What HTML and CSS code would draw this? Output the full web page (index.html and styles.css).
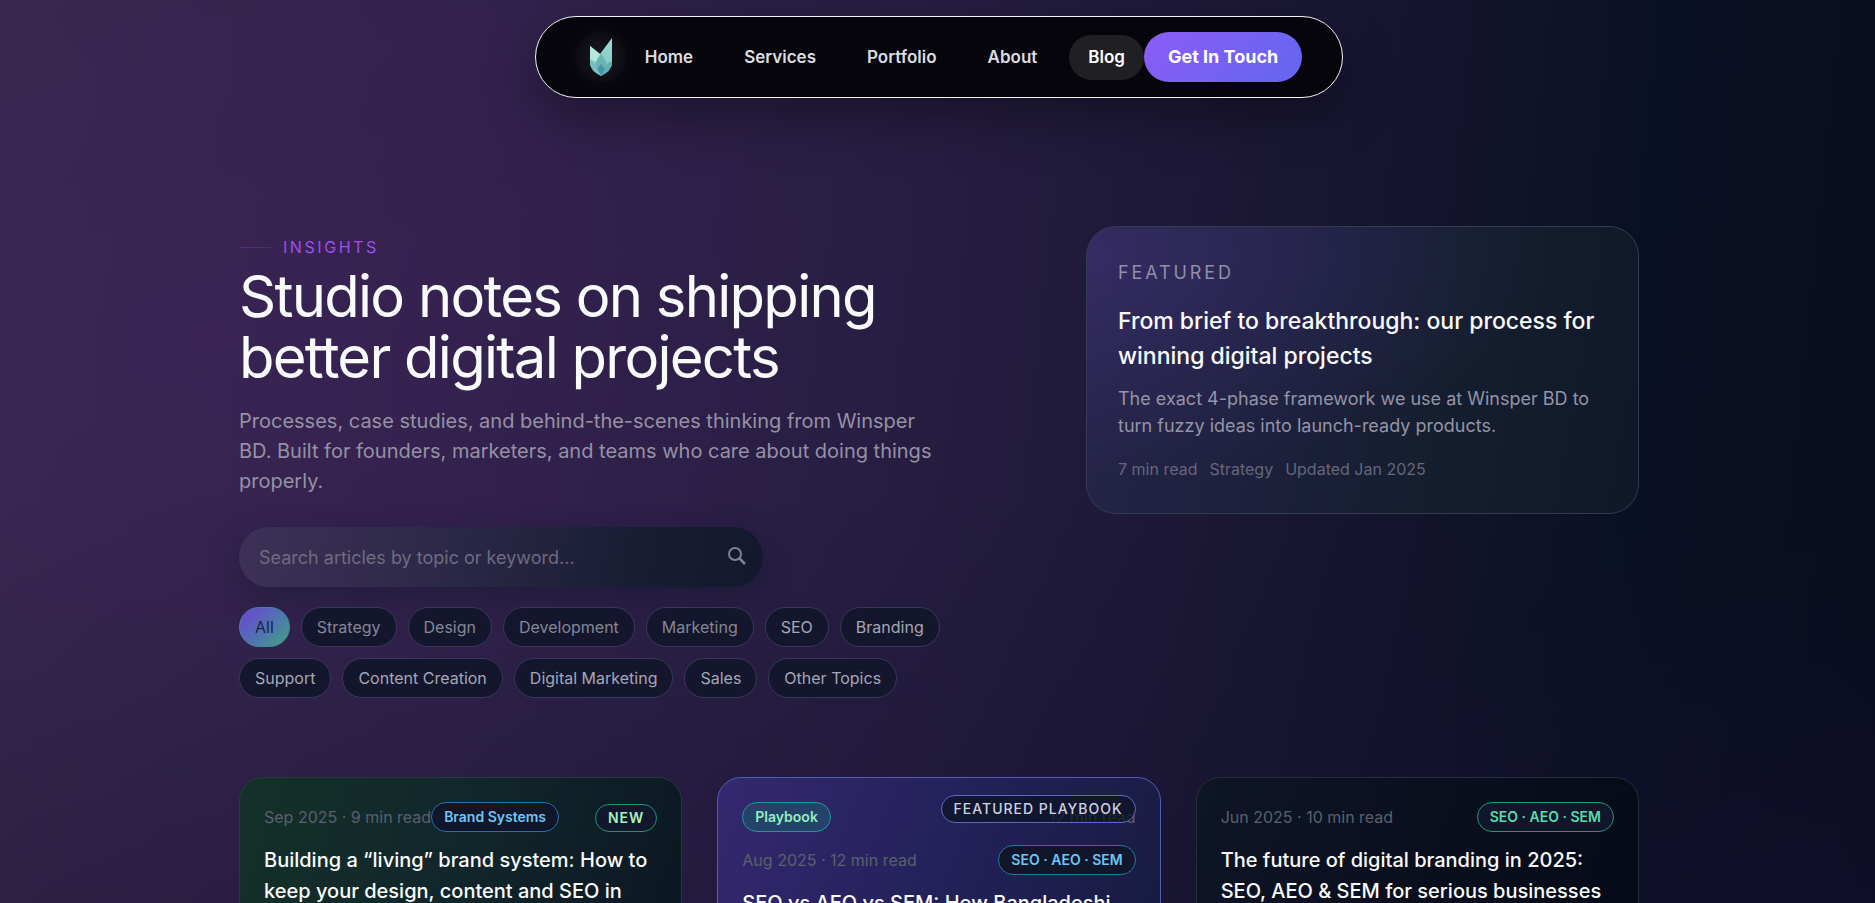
FILE: index.html
```html
<!DOCTYPE html>
<html lang="en">
<head>
  <meta charset="UTF-8" />
  <meta name="viewport" content="width=device-width, initial-scale=1.0"/>
  <title>Insights | Winsper BD</title>
  <link rel="stylesheet" href="styles.css">
</head>
<body>
  <header class="site-header">
    <nav class="navbar">
      <a class="logo" href="#" aria-label="Winsper BD">
        <svg width="24" height="40" viewBox="0 0 24 40">
          <defs>
            <linearGradient id="leaf" x1="0" y1="0" x2="0" y2="1">
              <stop offset="0" stop-color="#9fdcd4"/>
              <stop offset="0.6" stop-color="#8accc8"/>
              <stop offset="1" stop-color="#4fa3ab"/>
            </linearGradient>
          </defs>
          <path d="M1 9 L11 17 L23 1 V27 Q22 34 12 39 Q2 34 1 27 Z" fill="url(#leaf)"/>
          <path d="M1 9 L11 17 L7 25 L1 22 Z" fill="#b5e6df"/>
          <path d="M12 17 Q19 25 17 31 L12 36 L7 31 Q5 25 12 17 Z" fill="#6bb4b4"/>
          <path d="M1 24 Q8 25 12 39 Q2 34 1 27 Z" fill="#79bfc0"/>
          <path d="M23 24 Q15 28 12 39 Q22 34 23 27 Z" fill="#62b0b4"/>
          <path d="M12 27 L16 32 L12 38 L8 32 Z" fill="#4797a2"/>
        </svg>
      </a>
      <div class="nav-links">
        <a href="#">Home</a>
        <a href="#">Services</a>
        <a href="#">Portfolio</a>
        <a href="#">About</a>
        <a href="#" class="active">Blog</a>
      </div>
      <a class="nav-cta" href="#">Get In Touch</a>
    </nav>
  </header>

  <main class="container">
    <section class="hero">
      <div class="hero-text">
        <p class="eyebrow">INSIGHTS</p>
        <h1>Studio notes on shipping better digital projects</h1>
        <p class="lead">Processes, case studies, and behind-the-scenes thinking from Winsper BD. Built for founders, marketers, and teams who care about doing things properly.</p>

        <form class="search">
          <input type="search" aria-label="Search articles" placeholder="Search articles by topic or keyword...">
          <button type="button" aria-label="Search">
            <svg width="20" height="20" viewBox="0 0 20 20" fill="none" stroke="currentColor" stroke-width="2">
              <circle cx="8" cy="7" r="6"/>
              <path d="M12 11 L18 17" stroke-width="2.5"/>
            </svg>
          </button>
        </form>

        <div class="filters">
          <button type="button" class="chip selected">All</button>
          <button type="button" class="chip dim">Strategy</button>
          <button type="button" class="chip dim">Design</button>
          <button type="button" class="chip dim">Development</button>
          <button type="button" class="chip dim">Marketing</button>
          <button type="button" class="chip">SEO</button>
          <button type="button" class="chip">Branding</button>
          <button type="button" class="chip">Support</button>
          <button type="button" class="chip">Content Creation</button>
          <button type="button" class="chip">Digital Marketing</button>
          <button type="button" class="chip">Sales</button>
          <button type="button" class="chip">Other Topics</button>
        </div>
      </div>

      <aside class="featured">
        <p class="featured-label">FEATURED</p>
        <h2>From brief to breakthrough: our process for winning digital projects</h2>
        <p class="featured-text">The exact 4-phase framework we use at Winsper BD to turn fuzzy ideas into launch-ready products.</p>
        <div class="featured-meta">
          <span>7 min read</span>
          <span>Strategy</span>
          <span>Updated Jan 2025</span>
        </div>
      </aside>
    </section>

    <section class="posts">
      <article class="post post-new">
        <span class="badge badge-new">NEW</span>
        <div class="post-meta start">
          <span>Sep 2025 · 9 min read</span>
          <span class="tag blue">Brand Systems</span>
        </div>
        <h3>Building a “living” brand system: How to keep your design, content and SEO in</h3>
      </article>

      <article class="post post-playbook">
        <span class="badge badge-playbook">FEATURED PLAYBOOK</span>
        <div class="post-meta">
          <span class="tag mint">Playbook</span>
          <span>12 min read</span>
        </div>
        <div class="post-meta">
          <span>Aug 2025 · 12 min read</span>
          <span class="tag cyan">SEO · AEO · SEM</span>
        </div>
        <h3>SEO vs AEO vs SEM: How Bangladeshi</h3>
      </article>

      <article class="post">
        <div class="post-meta">
          <span>Jun 2025 · 10 min read</span>
          <span class="tag green">SEO · AEO · SEM</span>
        </div>
        <h3>The future of digital branding in 2025: SEO, AEO &amp; SEM for serious businesses</h3>
      </article>
    </section>
  </main>
</body>
</html>
```

FILE: styles.css
```css
* {
  box-sizing: border-box;
  margin: 0;
  padding: 0;
}
html {
  scrollbar-width: none;
}
body {
  min-height: 100vh;
  padding-left: 3px;
  font-family: Inter, "Noto Sans", sans-serif;
  color: #f9fafb;
  background:
    radial-gradient(ellipse 40% 50% at 12% 35%, rgba(76, 29, 110, 0.2), transparent),
    radial-gradient(ellipse 40% 40% at 100% 100%, rgba(30, 16, 62, 0.3), transparent),
    linear-gradient(to bottom, transparent 50%, rgba(16, 14, 40, 0.3)),
    linear-gradient(96deg, #37294e 0%, #30224a 25%, #261d41 48%, #181632 68%, #0b1124 84%, #080d1e 100%);
}
a {
  color: inherit;
  text-decoration: none;
}
button, input {
  font: inherit;
}

/* navbar */
.site-header {
  display: flex;
  justify-content: center;
  padding-top: 16px;
}
.navbar {
  display: flex;
  align-items: center;
  padding: 15px 40px;
  background: #05050b;
  border: 1px solid #f1f1f5;
  border-radius: 41px;
  box-shadow: 0 20px 50px rgba(0, 0, 0, 0.35);
}
.logo {
  width: 50px;
  height: 50px;
  display: grid;
  place-items: center;
  border-radius: 50%;
  background: radial-gradient(circle, rgba(255, 255, 255, 0.08), rgba(255, 255, 255, 0.03) 70%);
  box-shadow: 0 0 20px 4px rgba(255, 255, 255, 0.03);
}
.nav-links {
  display: flex;
  gap: 13px;
}
.nav-links a {
  padding: 12px 19px;
  border-radius: 23px;
  font-size: 17px;
  line-height: 21px;
  font-weight: 600;
  color: #dcdce2;
}
.nav-links .active {
  background: #1f1f24;
  color: #fff;
}
.nav-cta {
  padding: 14px 24px;
  border-radius: 25px;
  font-size: 18px;
  line-height: 22px;
  font-weight: 700;
  color: #fff;
  background: linear-gradient(135deg, #8b5cf6, #6366f1);
}

/* hero */
.container {
  max-width: 1400px;
  margin: 0 auto;
}
.hero {
  display: grid;
  grid-template-columns: 1fr 553px;
  gap: 142px;
  align-items: start;
  padding-top: 128px;
}
.eyebrow {
  display: flex;
  align-items: center;
  gap: 12px;
  margin-top: 9px;
  font-size: 16px;
  line-height: 24px;
  letter-spacing: 0.16em;
  color: #a24bf0;
}
.eyebrow::before {
  content: "";
  width: 32px;
  height: 1px;
  background: linear-gradient(90deg, #56308a, #4a2c74);
}
h1 {
  margin-top: 7px;
  font-size: 58px;
  line-height: 61px;
  font-weight: 400;
  letter-spacing: -0.03em;
}
.lead {
  max-width: 700px;
  margin-top: 18px;
  font-size: 20px;
  line-height: 30px;
  color: #9691a5;
}
.search {
  display: flex;
  align-items: center;
  width: 524px;
  height: 60px;
  margin-top: 31px;
  padding: 0 16px 0 20px;
  border-radius: 30px;
  background: linear-gradient(100deg, #3d3156, #2c2848 40%, #191d33 75%, #12182d);
  box-shadow: 0 10px 30px rgba(15, 23, 42, 0.4);
}
.search input {
  flex: 1;
  background: none;
  border: none;
  outline: none;
  font-size: 18px;
  color: #f9fafb;
}
.search input::placeholder {
  color: #6f6b80;
}
.search button {
  display: flex;
  background: none;
  border: none;
  color: #83818f;
}
.filters {
  display: flex;
  flex-wrap: wrap;
  gap: 11px;
  margin-top: 20px;
}
.chip {
  padding: 0 15px;
  height: 40px;
  border: 1px solid #38385a;
  border-radius: 20px;
  background: #13162d;
  color: #a5a7b4;
  font-size: 16px;
}
.chip.dim {
  color: #858795;
}
.chip.selected {
  border-color: #4386a0;
  background: linear-gradient(135deg, #7040d8, #5270b4 50%, #3fa580);
  color: #1c2342;
}

/* featured card */
.featured {
  padding: 32px 31px 30px;
  min-height: 288px;
  border: 1px solid #363c50;
  border-radius: 30px;
  background:
    radial-gradient(ellipse at 0 10%, rgba(88, 60, 160, 0.3), transparent 60%),
    linear-gradient(100deg, #26254a, #1a1f38 45%, #151e2e 65%, #101729);
}
.featured-label {
  font-size: 18px;
  line-height: 28px;
  letter-spacing: 0.16em;
  color: #918eaa;
}
.featured h2 {
  margin-top: 17px;
  font-size: 23px;
  line-height: 35px;
  font-weight: 500;
}
.featured-text {
  margin-top: 11px;
  font-size: 18px;
  line-height: 27px;
  color: #9494a6;
}
.featured-meta {
  display: flex;
  gap: 12px;
  margin-top: 18px;
  font-size: 16px;
  line-height: 24px;
  color: #66667c;
}

/* posts */
.posts {
  display: grid;
  grid-template-columns: repeat(3, 1fr);
  gap: 35px;
  margin-top: 79px;
}
.post {
  position: relative;
  padding: 24px 24px 48px;
  border: 1px solid #262c3c;
  border-radius: 24px;
  background: linear-gradient(110deg, #0e1525, #060a17);
}
.post-new {
  border-color: #27393f;
  background: linear-gradient(110deg, #143129, #11262b 50%, #0b1621);
}
.post-playbook {
  border-color: #545bb8;
  background: linear-gradient(110deg, #35286f, #23215a 50%, #171b3e);
}
.post-meta {
  display: flex;
  align-items: center;
  justify-content: space-between;
  margin-bottom: 13px;
  font-size: 16px;
  line-height: 24px;
  color: #5b606d;
}
.post-meta.start {
  justify-content: flex-start;
}
.tag {
  padding: 0 12px;
  border: 1px solid;
  border-radius: 15px;
  background: #11162b;
  font-size: 14px;
  line-height: 28px;
  font-weight: 600;
}
.tag.blue {
  border-color: #2573ac;
  color: #6fc5f6;
}
.tag.mint {
  border-color: #1f9a9c;
  background: #24426a;
  color: #93edbd;
}
.tag.cyan {
  border-color: #1f7ba6;
  color: #6ac6f6;
}
.tag.green {
  border-color: #1d9a76;
  color: #58dcab;
}
.badge {
  position: absolute;
  right: 24px;
  padding: 0 12px;
  border: 1px solid;
  border-radius: 15px;
  background: #12182b;
  font-size: 14px;
  line-height: 26px;
  font-weight: 600;
  letter-spacing: 1px;
}
.badge-new {
  top: 26px;
  border-color: #22946f;
  color: #a9efc0;
}
.badge-playbook {
  top: 17px;
  border-color: #6464c8;
  background: rgba(12, 20, 36, 0.75);
  font-weight: 500;
  color: #cfd2e0;
}
.post h3 {
  font-size: 20px;
  line-height: 31px;
  font-weight: 500;
}
```
